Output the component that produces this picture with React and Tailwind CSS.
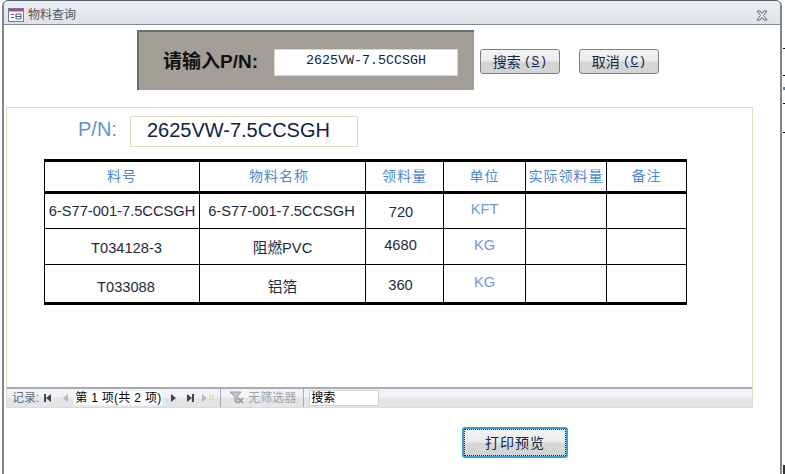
import React from 'react';

const sans = "font-['Liberation_Sans','Noto_Sans_CJK_SC',sans-serif]";

const rows = [
  [
    { text: '6-S77-001-7.5CCSGH', cls: 'text-[#1c2a3a]' },
    { text: '6-S77-001-7.5CCSGH', cls: 'text-[#1c2a3a] pr-[2px]' },
    { text: '720', cls: 'text-[#1c2a3a] pr-[7px] pt-[2px]' },
    { text: 'KFT', cls: 'text-[#6c9be0] pb-[4px]' },
  ],
  [
    { text: 'T034128-3', cls: 'text-[#1c2a3a] pl-[9px] pt-[2px]' },
    { text: '阻燃PVC', cls: 'text-[#1c2a3a] pt-[3px]' },
    { text: '4680', cls: 'text-[#1c2a3a] pr-[8px] pb-[3px]' },
    { text: 'KG', cls: 'text-[#7d93dc] pb-[4px]' },
  ],
  [
    { text: 'T033088', cls: 'text-[#1c2a3a] pl-[8px] pt-[6px]' },
    { text: '铝箔', cls: 'text-[#1c2a3a] pt-[7px]' },
    { text: '360', cls: 'text-[#1c2a3a] pr-[8px] pt-[2px]' },
    { text: 'KG', cls: 'text-[#7d93dc] pb-[4px]' },
  ],
];

const headers = [
  { text: '料号', cls: '' },
  { text: '物料名称', cls: 'pr-[7px]' },
  { text: '领料量', cls: '' },
  { text: '单位', cls: '' },
  { text: '实际领料量', cls: '' },
  { text: '备注', cls: '' },
];

const Triangle = ({ dir = 'right', bar = false, fill = '#3c4650' }) => (
  <svg width="8" height="10" viewBox="0 0 8 10" className="shrink-0">
    {dir === 'right' ? <path d="M1 1l5 4-5 4z" fill={fill} /> : <path d="M7 1L2 5l5 4z" fill={fill} />}
    {bar && <rect x={dir === 'right' ? 6 : 0} y="1" width="2" height="8" fill={fill} />}
  </svg>
);

const Button = ({ label, hot }) => (
  <button className="w-[80px] h-[25px] rounded-[3px] border border-[#7b7f84] bg-[linear-gradient(#f4f4f4_0%,#ebebeb_48%,#d6d6d6_52%,#d3d3d3_100%)] text-[14px] text-[#10294a] font-['Noto_Sans_CJK_SC',sans-serif] flex items-center justify-center">
    {label} <span className="ml-[3px] font-['Liberation_Mono',monospace] text-[13px]">(<u>{hot}</u>)</span>
  </button>
);

export default function App() {
  return (
    <div className={`relative w-[785px] h-[474px] overflow-hidden bg-white ${sans}`}>
      {/* ticks of the table behind the window */}
      <div className="absolute left-[783px] top-[48px] w-[2px] h-px bg-black" />
      <div className="absolute left-[783px] top-[75px] w-[2px] h-px bg-black" />
      <div className="absolute left-[783px] top-[87px] w-[2px] h-[3px] bg-[#3b82c4]" />
      <div className="absolute left-[783px] top-[103px] w-[2px] h-px bg-black" />
      <div className="absolute left-[783px] top-[132px] w-[2px] h-px bg-black" />
      <div className="absolute left-[783px] top-[465px] w-[2px] h-[9px] bg-[#333]" />

      <div className="ml-[2px] w-[780px] h-[474px] flex flex-col border-x-2 border-t border-x-[#80868c] border-t-[#4f5b66] rounded-t-[6px] overflow-hidden">
        {/* title bar */}
        <div className="h-[24px] shrink-0 flex items-center pt-[5px] pl-[4px] pr-[12px] border-b border-[#7f8790] bg-[linear-gradient(#eceef2,#dfe3e8)]">
          <svg width="16" height="14" viewBox="0 0 16 14" className="shrink-0">
            <rect x="0.5" y="0.5" width="15" height="13" fill="#fdfdff" stroke="#6f7ea8" />
            <rect x="1" y="1" width="14" height="2.5" fill="#c8416f" />
            <path d="M3 6.5h3M3 9.5h3M8 6h5v5H8zM8 8.5h5" stroke="#4a5a90" fill="none" />
          </svg>
          <span className="ml-[4px] text-[12px] text-[#4c5763]">物料查询</span>
          <svg width="12" height="11" viewBox="0 0 12 11" className="ml-auto shrink-0">
            <path d="M1 1h3l2 2.5L8 1h3L7.5 5.5 11 10H8L6 7.5 4 10H1l3.500-4.500z" fill="#eef0f3" stroke="#5c6470" />
          </svg>
        </div>

        {/* search row */}
        <div className="flex items-center mt-[5px] ml-[133px] h-[60px] shrink-0">
          <div className="w-[337px] h-[60px] flex items-center pt-[3px] bg-[#a39e97] border-t-2 border-l-2 border-[#6d6d6b]">
            <span className="ml-[24px] w-[111px] text-[19px] font-bold text-[#111] whitespace-nowrap">请输入P/N:</span>
            <div className="w-[184px] h-[27px] pb-[3px] bg-white border border-[#ddd8bc] flex items-center justify-center font-['Liberation_Mono',monospace] text-[13.33px] text-[#10243f]">
              2625VW-7.5CCSGH
            </div>
          </div>
          <div className="ml-[6px] mt-[3px]"><Button label="搜索" hot="S" /></div>
          <div className="ml-[19px] mt-[3px]"><Button label="取消" hot="C" /></div>
        </div>

        {/* form panel */}
        <div className="mt-[17px] ml-[2px] w-[747px] h-[301px] shrink-0 flex flex-col border border-[#e0dcc6]">
          <div className="flex items-center mt-[8px] ml-[71px] h-[31px]">
            <span className="pb-[6px] text-[20px] text-[#5a94dc]">P/N:</span>
            <div className="ml-[13px] w-[228px] h-[31px] border border-[#e0dcc0] flex items-center pl-[16px] pb-[3px] text-[20px] text-[#0f2440]">
              2625VW-7.5CCSGH
            </div>
          </div>

          {/* table */}
          <div className="mt-[12px] ml-[37px] w-[643px] grid grid-cols-[155px_166px_78px_82px_81px_79px] grid-rows-[32px_35px_36px_37px] border-t-[3px] border-b-[3px] border-x border-black text-[14.67px]">
            {headers.map((h, i) => (
              <div
                key={h.text}
                className={`flex items-center justify-center border-b-[3px] border-black text-[14px] text-[#4f87d2] tracking-[1px] whitespace-nowrap ${i < 5 ? 'border-r' : ''} ${h.cls}`}
              >
                {h.text}
              </div>
            ))}
            {rows.map((row, r) => (
              <React.Fragment key={r}>
                {row.map((cell, c) => (
                  <div
                    key={c}
                    className={`flex items-center justify-center border-r border-black whitespace-nowrap ${r < 2 ? 'border-b' : ''} ${cell.cls}`}
                  >
                    {cell.text}
                  </div>
                ))}
                <div className={`border-r border-black ${r < 2 ? 'border-b' : ''}`} />
                <div className={`border-black ${r < 2 ? 'border-b' : ''}`} />
              </React.Fragment>
            ))}
          </div>

          {/* record navigation */}
          <div className="mt-auto h-[20px] flex items-center border-t-2 border-[#a8acb2] bg-[linear-gradient(#f2f3f5_0%,#f2f3f5_45%,#e3e5e8_50%,#e3e5e8_100%)] text-[12px] whitespace-nowrap">
            <span className="ml-[5px] text-[#5f6e7d]">记录:</span>
            <span className="ml-[5px]"><Triangle dir="left" bar /></span>
            <span className="ml-[9px]"><Triangle dir="left" fill="#b4b8bc" /></span>
            <div className="ml-[4px] w-[90px] h-[16px] bg-white flex items-center justify-center text-black border border-[#eceef0] tracking-[0.3px]">第 1 项(共 2 项)</div>
            <span className="ml-[7px]"><Triangle /></span>
            <span className="ml-[8px]"><Triangle bar /></span>
            <span className="ml-[7px] flex items-center">
              <Triangle fill="#b4b8bc" />
              <svg width="6" height="7" viewBox="0 0 6 7"><path d="M0 0h2v2H0zM3 0h2v2H3zM0 3h2v2H0zM3 3h2v2H3z" fill="#e4d9a0" /></svg>
            </span>
            <div className="ml-[5px] w-px h-full bg-[#a8acb2]" />
            <svg width="16" height="14" viewBox="0 0 16 14" className="ml-[8px] shrink-0">
              <path d="M1 1h11L8 6v6L6 11V6z" fill="#c4c7ca" stroke="#9a9ea3" />
              <path d="M9 7l5 5M14 7l-5 5" stroke="#8f9398" strokeWidth="1.500" />
            </svg>
            <span className="ml-[3px] text-[#a0a4a8]">无筛选器</span>
            <div className="ml-[7px] w-px h-full bg-[#a8acb2]" />
            <div className="ml-[5px] w-[70px] h-[16px] bg-white border border-[#cfd1d4] pl-[1px] leading-[15px] text-black">搜索</div>
          </div>
        </div>

        {/* print button */}
        <div className="mt-[19px] ml-[458px] shrink-0">
          <div className="w-[106px] h-[31px] rounded-[3px] border-2 border-[#3a9fd8] bg-[linear-gradient(#f4f4f4_0%,#ebebeb_48%,#d8d8d8_52%,#d3d3d3_100%)]">
            <div className="h-full flex items-center justify-center border border-dotted border-[#222] text-[14px] tracking-[1px] text-[#10294a] font-['Noto_Sans_CJK_SC',sans-serif]">打印预览</div>
          </div>
        </div>
      </div>
    </div>
  );
}
